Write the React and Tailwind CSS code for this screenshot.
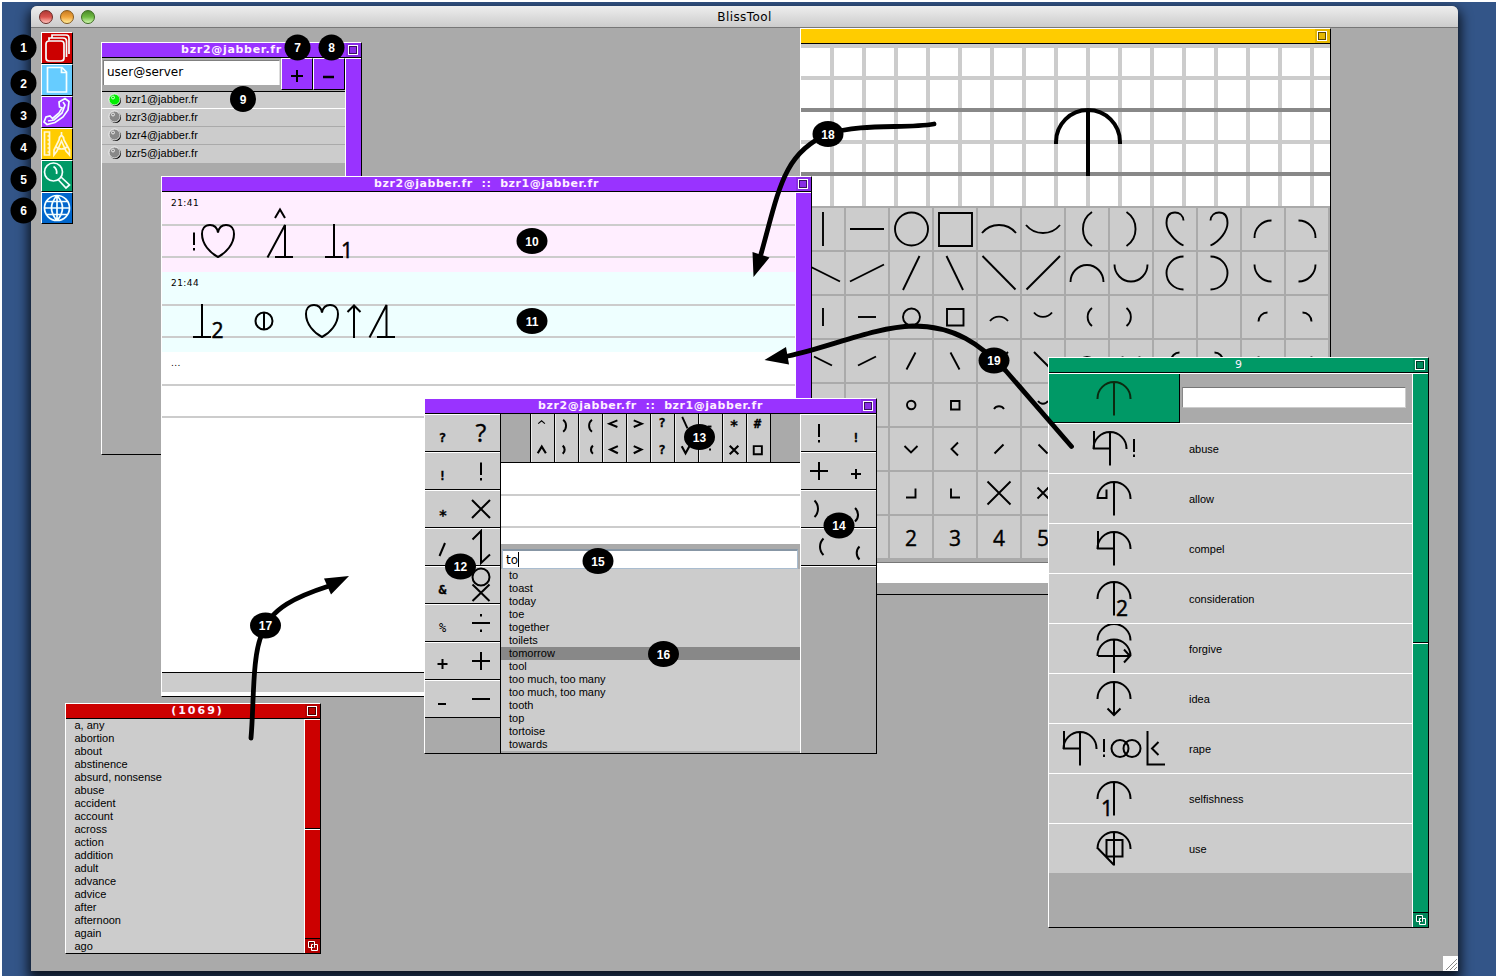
import React from 'react';

const S = ({ d, w = 2, ...p }) => <path d={d} fill="none" stroke="black" strokeWidth={w} {...p} />;
const Txt = ({ x, y, size = 21, children }) => (
  <text x={x} y={y} fontSize={size} stroke="black" strokeWidth=".5" fontFamily="'Open Sans', sans-serif">{children}</text>
);

function Win({ place, color, title, titleClass = 'tracking-[0.55px]', children }) {
  return (
    <section className={`absolute flex flex-col border border-t-white border-l-white border-r-black border-b-black bg-[#aaaaaa] ${place}`}>
      <header className={`relative flex h-[15px] shrink-0 items-center justify-center border-b border-black ${color}`}>
        <h2 className={`whitespace-pre font-['DejaVu_Sans'] text-[11px] leading-[14px] font-bold text-[#fff0ff] ${titleClass}`}>{title}</h2>
        <div className="absolute top-0 right-0 flex h-[14px] w-[15px] items-center justify-center bg-black/10 pr-[2px]">
          <div className="h-[10px] w-[10px] border border-white p-0"><div className="h-full w-full border border-black/60" /></div>
        </div>
      </header>
      <div className="flex min-h-0 flex-1">{children}</div>
    </section>
  );
}

function Resize({ color }) {
  return (
    <div className={`h-[15px] border-t border-black ${color}`}>
      <svg className="block" width="15" height="14" viewBox="0 0 15 14">
        <rect width="15" height="14" fill="black" opacity=".12" />
        <path d="M3.5 2.5h6v6h-6zM6.500 5.500h6v6h-6z" fill="none" stroke="white" />
        <path d="M8.500 9.500v-5M4.500 7.500v-4h4" fill="none" stroke="black" opacity=".6" />
      </svg>
    </div>
  );
}

function Scroll({ color, upper }) {
  return (
    <div className={`flex w-4 shrink-0 flex-col border-l border-white ${color}`}>
      <div className="h-px bg-white" />
      {upper && (
        <>
          <div className={`border-b border-black ${upper}`} />
          <div className="flex-1 border-t border-white" />
          <Resize color={color} />
        </>
      )}
    </div>
  );
}

/* ---------- dock ---------- */
const dock = [
  ['bg-[#cc0000]', <g key="a"><rect x="4" y="8" width="18" height="20" rx="3" /><path d="M7 7.500V5H21Q24.500 5 24.500 8V24M10 4.500V2H24Q27 2 27 5V21" /></g>],
  ['bg-[#66ccff]', <path key="b" d="M5.500 2.500H20L24.500 7V27H5.500ZM19.500 2.500V7.500H24.500" />],
  ['bg-[#9933ff]', <path key="c" d="M17 5L23 1.500L27 4.500L26 13L21 20L13 25.500L5 27.500L2 25L4 20L8 19L10.500 21.500L17 16L20 11L17.500 10Z M21 5L23 8L20 16L12 23L6 24" />],
  ['bg-[#ffcc00]', <path key="d" d="M2.500 3H7.500V26H2.500ZM7.500 7H5.500M7.500 11H5.500M7.500 15H5.500M7.500 19H5.500M7.500 23H5.500M19.500 3V6M19.500 6Q17 8 17 11L12 21V26L15 22L19.500 12L24 22L27.500 26V21L22 11Q22 8 19.500 6M14 18Q19.500 22 25 18" />],
  ['bg-[#009966]', <path key="e" d="M20.500 11A9 9 0 1 1 2.500 11A9 9 0 1 1 20.500 11M11.500 5.500Q15.500 8 14.500 13M16.500 19L24 27L27.500 24L19 16" />],
  ['bg-[#0066cc]', <path key="f" d="M27.500 15A12.500 12.500 0 1 1 2.500 15A12.500 12.500 0 1 1 27.500 15M15 2.500V27.500M2.500 15H27.500M15 2.500Q4 15 15 27.500M15 2.500Q26 15 15 27.500M5 8.500H25M5 21.500H25" />],
];

function Dock() {
  return (
    <nav className="absolute top-[32px] left-[41px] flex flex-col">
      {dock.map(([c, g], i) => (
        <div key={i} className={`h-8 w-8 border border-t-white border-l-white border-r-black border-b-black ${c}`}>
          <svg width="30" height="30" viewBox="0 0 30 30" fill="none" stroke={i === 3 ? '#fff8d8' : '#f4ffff'} strokeWidth="1.700">{g}</svg>
        </div>
      ))}
    </nav>
  );
}

/* ---------- roster ---------- */
function Roster() {
  return (
    <Win place="left-[101px] top-[42px] w-[261px] h-[413px]" color="bg-[#9933ff]" title="bzr2@jabber.fr" titleClass="tracking-[0.7px]">
      <div className="flex flex-1 flex-col">
        <div className="flex h-[34px] border-b border-black">
          <div className="mt-[2px] ml-px h-[25px] w-[177px] border-t border-l border-[#808080] border-r border-r-[#ddd] bg-white pl-[3px] font-['DejaVu_Sans'] text-[12px] leading-[22px]">user@server</div>
          <div className="ml-px flex h-[32px] w-[32px] items-center justify-center border border-t-white border-l-white border-r-black border-b-black bg-[#9933ff]">
            <svg width="12" height="12" viewBox="0 0 12 12" className="mt-[3px]"><S d="M0 6H12M6 0V12" /></svg>
          </div>
          <div className="flex h-[32px] w-[32px] items-center justify-center border border-t-white border-l-white border-r-black border-b-black bg-[#9933ff]">
            <svg width="12" height="12" viewBox="0 0 12 12" className="mt-[6px]"><S w={2.500} d="M0 6H11" /></svg>
          </div>
        </div>
        {['bzr1', 'bzr3', 'bzr4', 'bzr5'].map((n, i) => (
          <div key={n} className={`flex items-center border-b bg-[#cccccc] pb-px pl-[6px] font-['Liberation_Sans'] text-[11px] leading-[15px] ${i === 0 ? 'h-[17px] border-white' : i === 3 ? 'h-[18px] border-transparent' : 'h-[18px] border-[#aaaaaa]'}`}>
            <svg width="14" height="14" viewBox="0 0 14 14" className="mr-[3.500px]">
              <circle cx="7.500" cy="7.500" r="5.500" fill="black" />
              <circle cx="6.500" cy="6.500" r="5.500" fill={i === 0 ? '#00ee00' : '#888888'} stroke="white" strokeWidth=".8" />
              <circle cx="5" cy="4.500" r="1.500" fill="none" stroke="white" strokeWidth=".8" />
            </svg>
            {n}@jabber.fr
          </div>
        ))}
      </div>
      <Scroll color="bg-[#9933ff]" />
    </Win>
  );
}

/* ---------- conversation ---------- */
const heart = 'M56 40.500C55 35 52 33 48 33C42.500 33 40 37 40 42C40 52 48 61 56 65C64 61 72 52 72 42C72 37 69.500 33 64 33C60 33 57 35 56 40.500';

function Line({ bg, time, children }) {
  return (
    <div className={`relative flex h-[80px] flex-col ${bg}`}>
      <div className="h-[32px] shrink-0 pt-[5px] pl-[9px] font-['DejaVu_Sans'] text-[9px] leading-[12px] tracking-[0.45px]">{time}</div>
      <div className="h-[2px] bg-[#cccccc]" />
      <div className="h-[30px]" />
      <div className="h-[2px] bg-[#cccccc]" />
      <svg className="absolute top-0 left-0" width="300" height="80" viewBox="0 0 300 80">{children}</svg>
    </div>
  );
}

function Chat() {
  return (
    <Win place="left-[161px] top-[176px] w-[651px] h-[521px]" color="bg-[#9933ff]" title="bzr2@jabber.fr  ::  bzr1@jabber.fr">
      <div className="flex flex-1 flex-col bg-white">
        <Line bg="bg-[#ffeeff]" time="21:41">
          <S d="M32 40.500V53M32 56V58.500" />
          <S d={heart} />
          <S d="M113 26L118 17.500L123 26" />
          <S d="M105.500 65.500L123 33V65M113 65H131" />
          <S d="M172 32V65M163 65H181" />
          <Txt x="179" y="65.500">1</Txt>
        </Line>
        <Line bg="bg-[#eeffff]" time="21:44">
          <S d="M40 32V65M31 65H49" />
          <Txt x="49.500" y="65.500">2</Txt>
          <circle cx="102" cy="49" r="8.500" fill="none" stroke="black" strokeWidth="2" />
          <S d="M102 41V58" />
          <S d={heart} transform="translate(104 0)" />
          <S d="M192 66V33M185.500 40L192 33.500L198.500 40" />
          <S d="M207.500 65.500L224.500 33V65M215 65H233" />
        </Line>
        <Line bg="bg-white" time="..." />
        <div className="flex-1" />
        <div className="h-[20px] border-t border-black bg-[#cccccc]" />
        <div className="h-[4px] bg-white" />
      </div>
      <Scroll color="bg-[#9933ff]" />
    </Win>
  );
}

/* ---------- keyboard ---------- */
const Small = ({ x, y, c, size = 13 }) => (
  <text x={x} y={y} fontSize={size} fontWeight="700" textAnchor="middle" stroke="black" strokeWidth=".3" fontFamily="'DejaVu Sans Mono', monospace">{c}</text>
);
const leftKeys = [
  <g key="0"><Small x="17.500" y="27" c="?" /><text x="56" y="27" fontSize="25" textAnchor="middle" stroke="black" strokeWidth=".4" fontFamily="'Open Sans', sans-serif">?</text></g>,
  <g key="1"><Small x="17.500" y="27" c="!" /><S d="M56 9.500V22M56 25V27.500" /></g>,
  <g key="2"><Small x="18" y="29" c="*" size={14} /><S d="M47 9L65 27M65 9L47 27" /></g>,
  <g key="3"><S d="M14.500 27L20 14" /><S d="M47.500 10.500L56 2V34L65 25.500" /></g>,
  <g key="4"><Small x="17.500" y="27" c="&" /><circle cx="56" cy="10" r="8.500" fill="none" stroke="black" strokeWidth="2" /><S d="M47.500 17.500L64.500 34M64.500 17.500L47.500 34" /></g>,
  <g key="5"><text x="17.500" y="26.500" fontSize="12" textAnchor="middle" fontFamily="'DejaVu Sans Mono', monospace">%</text><S d="M47 18H65M56 9V11.500M56 24.500V27" /></g>,
  <g key="6"><S d="M12.500 21H22.500M17.500 16V26" /><S d="M47 18H65M56 9V27" /></g>,
  <g key="7"><S d="M13 23H21" /><S d="M47 18H65" /></g>,
];
const rightKeys = [
  <g key="0"><S d="M18 9V22M18 25V27.500" /><Small x="55" y="27" c="!" /></g>,
  <g key="1"><S d="M9 18H27M18 9V27" /><S d="M50 21H60M55 16V26" /></g>,
  <g key="2"><S d="M13.500 9.500A11.500 11.500 0 0 1 13.500 26" /><S d="M54 17A9 9 0 0 1 54 30.500" /></g>,
  <g key="3"><S d="M22.500 9.500A11.500 11.500 0 0 0 22.500 26" /><S d="M58.500 17.500A9 9 0 0 0 58.500 30.500" /></g>,
];
const strip = [
  <g key="0"><S d="M7.500 9L11 6L14.500 9" w={1.200} /><S d="M7 40L11.200 33L15.500 40" w={2.200} /></g>,
  <g key="1"><S d="M8.500 5A8 8 0 0 1 8.500 17.500" /><S d="M8 32A5.500 5.500 0 0 1 8 40.500" w={2.200} /></g>,
  <g key="2"><S d="M13.500 5A8 8 0 0 0 13.500 17.500" /><S d="M14.500 32A5.500 5.500 0 0 0 14.500 40.500" w={2.200} /></g>,
  <g key="3"><S d="M15 5.500L6.500 9L15 12.500" /><S d="M15.500 32.500L7.500 36L15.500 40" w={2.200} /></g>,
  <g key="4"><S d="M7 5.500L15.500 9L7 12.500" /><S d="M7 32.500L15 36L7 40" w={2.200} /></g>,
  <g key="5"><Small x="11.500" y="13" c="?" /><Small x="11.500" y="40.500" c="?" /></g>,
  <g key="6"><S d="M7.500 2L13 14" /><S d="M7 32.500L11 40L15 32.500" w={2.200} /></g>,
  <g key="7"><S d="M9 12H13" /><S d="M10.500 36H12.500" /></g>,
  <g key="8"><Small x="11.500" y="16" c="*" size={15} /><S d="M7 32L16 41M16 32L7 41" w={2.200} /></g>,
  <g key="9"><Small x="11" y="13.500" c="#" /><S d="M7 32.500H15.500V41H7Z" /></g>,
];
const words = ['to', 'toast', 'today', 'toe', 'together', 'toilets', 'tomorrow', 'tool', 'too much, too many', 'too much, too many', 'tooth', 'top', 'tortoise', 'towards'];

const Keys = ({ items, w }) => items.map((k, i) => (
  <div key={i} className="h-[38px] border-t border-b border-t-white border-b-black bg-[#cccccc]">
    <svg className="block" width={w} height="36" viewBox={`0 0 ${w} 36`}>{k}</svg>
  </div>
));

function Keyboard() {
  return (
    <Win place="left-[424px] top-[398px] w-[453px] h-[356px]" color="bg-[#9933ff]" title="bzr2@jabber.fr  ::  bzr1@jabber.fr">
      <div className="w-[76px] border-r border-black"><Keys items={leftKeys} w={75} /></div>
      <div className="flex w-[299px] flex-col">
        <div className="flex h-[49px] border-b border-black pl-[29px]">
          <div className="flex border-l border-black">
            {strip.map((g, i) => (
              <div key={i} className="h-[48px] w-[24px] border-r border-black bg-[#cccccc]">
                <svg className="block border-l border-white/60" width="23" height="48" viewBox="1 0 23 48">{g}</svg>
              </div>
            ))}
          </div>
        </div>
        <div className="h-[31px] bg-white" />
        <div className="h-[2px] bg-[#cccccc]" />
        <div className="h-[30px] bg-white" />
        <div className="h-[2px] bg-[#cccccc]" />
        <div className="h-[16px] bg-white" />
        <div className="h-[25px] bg-[#aaaaaa] pt-[5px] pl-px">
          <div className="flex h-[20px] w-[296px] items-center border border-t-2 border-[#a9bccf] border-t-[#8796a5] bg-white pl-[3px] font-['DejaVu_Sans'] text-[12px]">
            to<span className="h-[15px] w-px bg-black" />
          </div>
        </div>
        <ul className="bg-[#cccccc]">
          {words.map((w, i) => (
            <li key={i} className={`h-[13px] pl-2 font-['Liberation_Sans'] text-[11px] leading-[13px] ${i === 6 ? 'bg-[#888888]' : ''}`}>{w}</li>
          ))}
        </ul>
      </div>
      <div className="w-[76px] border-l border-white"><Keys items={rightKeys} w={75} /><div className="h-px bg-white" /></div>
    </Win>
  );
}

/* ---------- drawing editor ---------- */
const pieces = [
  ['M0-17V17', 'M-17 0H17', 'M17 0A16.500 16.500 0 1 1-16 0A16.500 16.500 0 1 1 17 0', 'M-16-16H17V17H-16Z', 'M-17 4A22 22 0 0 1 17 4', 'M-17-4A22 22 0 0 0 17-4', 'M5-17A20.500 20.500 0 0 0 5 17', 'M-4.500-17A20.500 20.500 0 0 1-4.500 17', 'M8.500-8.500C8-14 4-16.500 0-16.500C-7-16.500-8.500-11-8.500-6C-8.500 2-1 12 8.500 16.500', 'M-8.500-8.500C-8-14-4-16.500 0-16.500C7-16.500 8.500-11 8.500-6C8.500 2 1 12-8.500 16.500', 'M-8.500 9A17 17 0 0 1 8.500-8.500', 'M-8.500-8.500A17 17 0 0 1 8.500 9'],
  ['M-17-8.500L17 8.500', 'M-17 8.500L17-8.500', 'M-8 17L8.500-17', 'M-8.500-17L8 17', 'M-16.500-17L16.500 16.500', 'M-16.500 16.500L17-17', 'M-16.500 9A16.500 17 0 0 1 16.500 9', 'M-16.500-8.500A16.500 17 0 0 0 16.500-8.500', 'M8.500-16.500A17 16.500 0 0 0 8.500 16.500', 'M-8.500-16.500A17 16.500 0 0 1-8.500 16.500', 'M-8.500-8.500A17 17 0 0 0 8.500 8.500', 'M8.500-8.500A17 17 0 0 1-8.500 8.500'],
  ['M0-9V9', 'M-9 0H9', 'M9 0A8.500 8.500 0 1 1-8 0A8.500 8.500 0 1 1 9 0', 'M-8-8H8.500V8.500H-8Z', 'M-9 4A11.500 11.500 0 0 1 9 4', 'M-9-4.500A11.500 11.500 0 0 0 9-4.500', 'M5-9A11.500 11.500 0 0 0 5 9', 'M-4.500-9A11.500 11.500 0 0 1-4.500 9', '', '', 'M-4.500 4.500A9 9 0 0 1 4.500-4.500', 'M-4.500-4.500A9 9 0 0 1 4.500 4.500'],
  ['M-9-4.500L9 4.500', 'M-9 4.500L9-4.500', 'M-4.500 8.500L4.500-8.500', 'M-4.500-8.500L4.500 8.500', 'M-9 9L9-9', 'M-9-9L9 9', 'M-8.500 4.500A8.500 8.500 0 0 1 8.500 4.500', 'M-8.500-4.500A8.500 8.500 0 0 0 8.500-4.500', 'M4.500-8.500A8.500 8.500 0 0 0 4.500 8.500', 'M-4.500-8.500A8.500 8.500 0 0 1-4.500 8.500', 'M-4.500-4.500A9 9 0 0 0 4.500 4.500', 'M4.500-4.500A9 9 0 0 1-4.500 4.500'],
  ['', '', 'M4.500 0A4 4 0 1 1-4 0A4 4 0 1 1 4.500 0', 'M-4-4H4.500V4.500H-4Z', 'M-5 4A6 6 0 0 1 5 4', 'M-5-4A6 6 0 0 0 5-4', '', '', '', '', '', ''],
  ['', '', 'M-6.500-3L0 3.500L6.500-3', 'M3-6.500L-3.500 0L3 6.500', 'M-4.500 4.500L4.500-4.500', 'M-4.500-4.500L4.500 4.500', '', '', '', '', '', ''],
  ['', '', 'M-5 4.500H4.500V-4.500', 'M-4-4.500V4.500H5', 'M-11.500-11.500L11.500 11.500M11.500-11.500L-11.500 11.500', 'M-5.500-5.500L5.500 5.500M5.500-5.500L-5.500 5.500', '', '', '', '', '', ''],
];
const digits = ['', '', '2', '3', '4', '5', '', '', '', '', '', ''];

function Editor() {
  return (
    <Win place="left-[800px] top-[28px] w-[531px] h-[567px]" color="bg-[#ffcc00]" title="">
      <div className="flex flex-1 flex-col">
        <svg className="block bg-white" width="529" height="162" viewBox="801 44 529 162">
          {Array.from({ length: 16 }, (_, i) => <path key={i} d={`M${832 + i * 32} 44V206`} stroke="#ccc" strokeWidth="4" />)}
          <path d="M801 46H1330M801 78H1330M801 142H1330" stroke="#ccc" strokeWidth="4" />
          <path d="M801 110H1330M801 174H1330" stroke="#888" strokeWidth="4" />
          <path d="M1056 144V142A32 32 0 0 1 1120 142V144M1088 109V176" fill="none" stroke="black" strokeWidth="4" />
        </svg>
        <div className="grid grid-cols-[repeat(12,42px)] gap-[2px] pt-[2px] pl-px">
          {pieces.flat().map((d, i) => (
            <svg key={i} className="block bg-[#cccccc]" width="42" height="42" viewBox="-21 -21 42 42"><S d={d} w={1.9} /></svg>
          ))}
          {digits.map((n, i) => (
            <div key={i} className="flex h-[42px] items-center justify-center bg-[#cccccc] pt-[2px] font-['Open_Sans'] text-[21px] leading-none [-webkit-text-stroke:0.4px_black]">{n}</div>
          ))}
        </div>
        <div className="mt-[4px] h-[21px] border-t border-[#777] bg-white" />
      </div>
    </Win>
  );
}

/* ---------- search ---------- */
const dome = 'M48.500 25V24.500A16.500 16.500 0 0 1 81.500 24.500V25M65 8V41.500';
const results = [
  ['abuse', <g key="g"><S d={dome} transform="translate(-4 0)" /><S d="M45 7V24.500H61M85 15V28M85 30.500V33" /></g>],
  ['allow', <S key="g" d={`${dome}M49 24H57.500V15.500`} />],
  ['compel', <S key="g" d={`${dome}M49 7V24.500H65`} />],
  ['consideration', <g key="g"><S d={dome} /><Txt x="67" y="41.500">2</Txt></g>],
  ['forgive', <S key="g" d="M48.500 16.500A16.500 16.500 0 0 1 81.500 16.500M48.500 32A16.500 16.500 0 0 1 81.500 32M65 15.500V49M49 32H81M75 25.500L81 32L75 38.500" />],
  ['idea', <S key="g" d={`${dome}M58.500 34.500L65 41L71.500 34.500`} />],
  ['rape', <g key="g"><S d={dome} transform="translate(-34 0)" /><S d="M15 7V24.500H31M55 15V28M55 30.500V33M98.500 7V40.500H116M109.500 18L103 24.500L109.500 31" /><circle cx="71" cy="24.500" r="8.500" fill="none" stroke="black" strokeWidth="2" /><circle cx="83" cy="24.500" r="8.500" fill="none" stroke="black" strokeWidth="2" /></g>],
  ['selfishness', <g key="g"><S d={dome} /><Txt x="52" y="41.500">1</Txt></g>],
  ['use', <S key="g" d={`${dome}M57.500 16H73.500V32.500H57.500ZM49 24.500L65 41`} />],
];

function Search() {
  return (
    <Win place="left-[1048px] top-[357px] w-[381px] h-[571px]" color="bg-[#009966]" title="9" titleClass="font-medium">
      <div className="flex flex-1 flex-col">
        <div className="flex h-[50px] border-t border-white">
          <div className="h-[49px] w-[131px] border-r border-b border-black bg-[#009966]">
            <svg className="block" width="130" height="48" viewBox="0 0 130 48"><S d={dome} stroke="#0c2a10" /></svg>
          </div>
          <div className="mt-[13px] ml-[2px] h-[21px] w-[224px] border border-t-[#777] border-r-[#ccc] border-b-[#ccc] border-l-[#888] bg-white" />
        </div>
        {results.map(([w, g]) => (
          <div key={w} className="flex h-[50px] items-center border-t border-white bg-[#cccccc]">
            <svg className="block" width="140" height="49" viewBox="0 0 140 49">{g}</svg>
            <span className="pt-[2px] font-['Liberation_Sans'] text-[11px]">{w}</span>
          </div>
        ))}
      </div>
      <Scroll color="bg-[#009966]" upper="h-[269px]" />
    </Win>
  );
}

/* ---------- dictionary ---------- */
const dict = ['a, any', 'abortion', 'about', 'abstinence', 'absurd, nonsense', 'abuse', 'accident', 'account', 'across', 'action', 'addition', 'adult', 'advance', 'advice', 'after', 'afternoon', 'again', 'ago'];

function Dictionary() {
  return (
    <Win place="left-[65px] top-[703px] w-[256px] h-[251px]" color="bg-[#cc0000]" title="(1069)" titleClass="pl-[9px] tracking-[2px]">
      <ul className="flex-1 bg-[#cccccc]">
        {dict.map((w) => <li key={w} className="h-[13px] pl-[8.500px] font-['Liberation_Sans'] text-[11px] leading-[13px]">{w}</li>)}
      </ul>
      <Scroll color="bg-[#cc0000]" upper="h-[109px]" />
    </Win>
  );
}

/* ---------- callouts ---------- */
const badges = [
  [1, 23.5, 47.5], [2, 23.5, 83], [3, 23.5, 115], [4, 23.5, 147], [5, 23.5, 179], [6, 23.5, 210.5], [7, 297.5, 47.5], [8, 331.5, 47.5], [9, 243, 99],
  [10, 532, 241], [11, 532, 321], [12, 460.5, 566.5], [13, 699.5, 437], [14, 839, 525.5], [15, 598, 561], [16, 663.5, 654], [17, 265.5, 625.5], [18, 828, 134], [19, 994, 360.5],
];

function Callouts() {
  return (
    <svg className="pointer-events-none absolute top-0 left-0" width="1498" height="978" viewBox="0 0 1498 978">
      <g fill="none" stroke="black" strokeWidth="4.800" strokeLinecap="round">
        <path d="M251 738C254 705 252 655 262 634C270 608 298 596 329 586" />
        <path d="M934 124C905 129 862 123 828 134C783 153 779 190 761 254" />
        <path d="M1071.500 446.500L1006 371C980 344 955 326 913 326C875 327 830 347 788 356" />
      </g>
      <path d="M349 576L324 578.500L331 594.500ZM753.500 277L752.500 252L769.500 257.500ZM764.500 360L786 347L789 364.500Z" />
      {badges.map(([n, x, y]) => (
        <g key={n}>
          <ellipse cx={x} cy={y} rx={n > 9 ? 15.5 : 13} ry="13" />
          <text x={x} y={y + 4.5} fill="white" fontSize="12" fontWeight="700" textAnchor="middle" fontFamily="'Liberation Sans', sans-serif">{n}</text>
        </g>
      ))}
    </svg>
  );
}

export default function App() {
  return (
    <div className="relative h-[978px] w-[1498px] overflow-hidden bg-white font-['Liberation_Sans',sans-serif] text-black">
      <div className="absolute top-[2px] left-[2px] h-[974px] w-[1494px] overflow-hidden bg-[#335588]">
        <div className="absolute top-[4px] left-[29px] flex h-[965px] w-[1427px] flex-col overflow-hidden rounded-t-[6px] bg-[#aaaaaa] shadow-[0_6px_12px_3px_rgba(0,0,0,0.75)]">
          <div className="relative flex h-[22px] shrink-0 items-center justify-center border-b border-[#777] bg-gradient-to-b from-[#eeeeee] to-[#cccccc] pt-px font-['DejaVu_Sans'] text-[12px] tracking-[0.4px]">
            <div className="absolute top-[4px] left-[8px] flex gap-[7px]">
              <i className="h-[14px] w-[14px] rounded-full border border-[#6b2a26] bg-gradient-to-b from-[#b03a36] via-[#d9534d] to-[#ffc4c0]" />
              <i className="h-[14px] w-[14px] rounded-full border border-[#85591c] bg-gradient-to-b from-[#c97c22] via-[#f0a53c] to-[#ffee9a]" />
              <i className="h-[14px] w-[14px] rounded-full border border-[#3b6a20] bg-gradient-to-b from-[#4c8c28] via-[#6fbb42] to-[#d2f9ae]" />
            </div>
            BlissTool
          </div>
          <div className="flex flex-1 items-end justify-end">
            <svg width="15" height="15" viewBox="0 0 15 15" className="bg-white"><path d="M3 14L14 3M7 14L14 7M11 14L14 11" stroke="#888" /></svg>
          </div>
        </div>
      </div>
      <Dock />
      <Editor />
      <Roster />
      <Chat />
      <Keyboard />
      <Search />
      <Dictionary />
      <Callouts />
    </div>
  );
}
